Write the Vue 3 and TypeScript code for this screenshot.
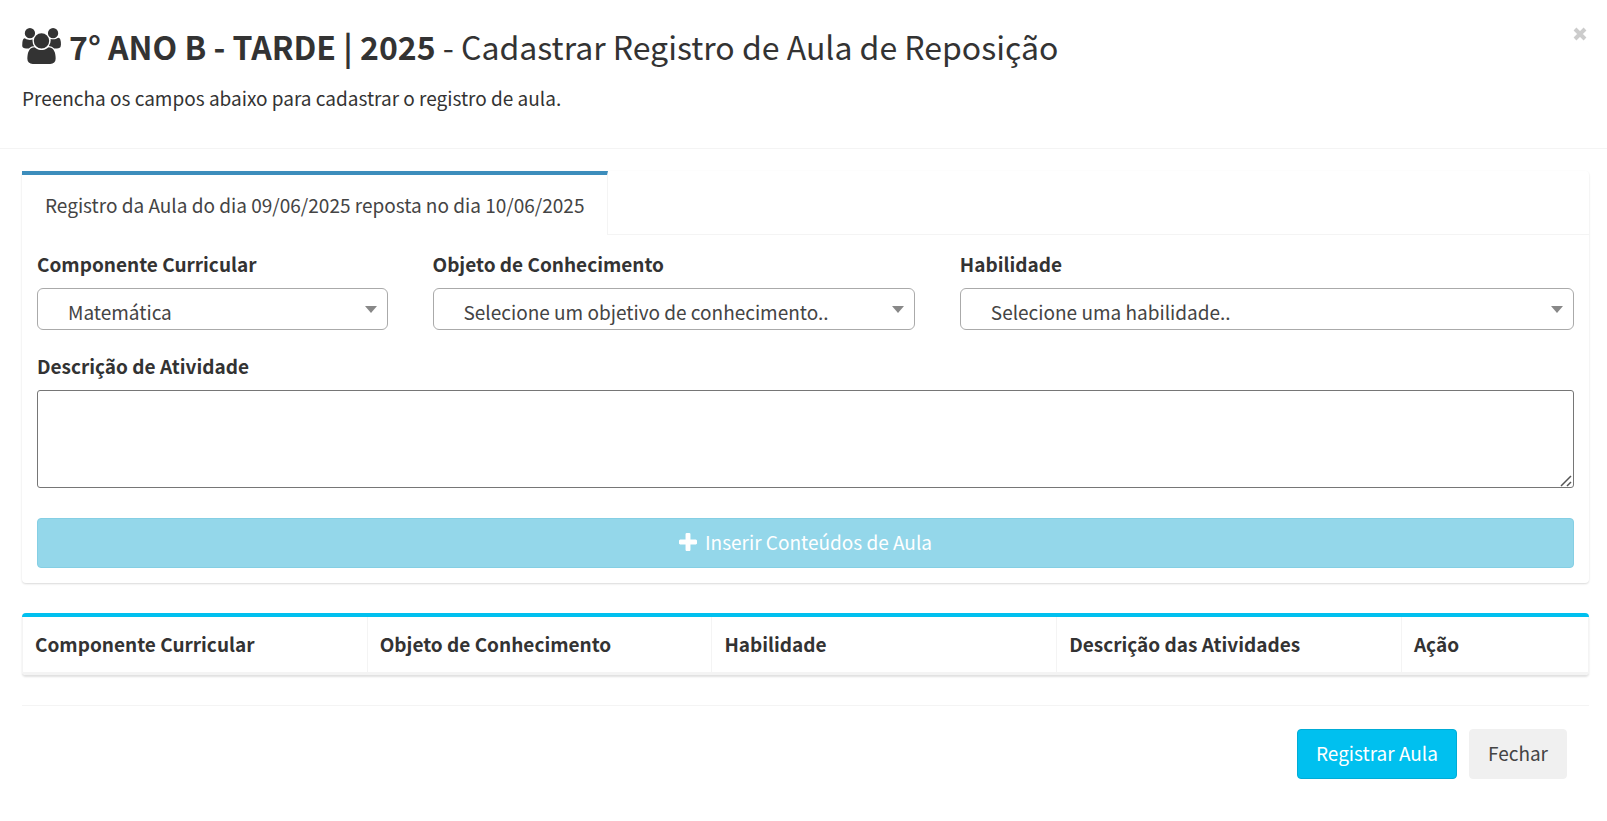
<script setup lang="ts">
import { ref } from 'vue'

interface Field {
  id: string
  label: string
  option: string
  span: string
}

const fields: Field[] = [
  { id: 'componente', label: 'Componente Curricular', option: 'Matemática', span: 'span-3' },
  { id: 'objeto', label: 'Objeto de Conhecimento', option: 'Selecione um objetivo de conhecimento..', span: 'span-4' },
  { id: 'habilidade', label: 'Habilidade', option: 'Selecione uma habilidade..', span: 'span-5' },
]

const columns: string[] = [
  'Componente Curricular',
  'Objeto de Conhecimento',
  'Habilidade',
  'Descrição das Atividades',
  'Ação',
]

const description = ref('')
</script>

<template>
  <div class="modal">
    <header class="modal-header">
      <div>
        <h1 class="title">
          <svg class="users" viewBox="0 0 1920 1792" aria-hidden="true">
            <path d="M593 896q-162 5-265 128h-134q-82 0-138-40.5t-56-118.5q0-353 124-353 6 0 43.5 21t97.5 42.5 119 21.5q67 0 133-23-5 37-5 66 0 159 90 287zm1071 637q0 120-73 189.5t-194 69.5h-874q-121 0-194-69.5t-73-189.5q0-53 3.5-103.5t14-109 26.5-108.5 43-97.5 62-81 85.5-53.5 111.5-20q10 0 43 21.5t73 48 107 48 135 21.5 135-21.5 107-48 73-48 43-21.5q61 0 111.5 20t85.5 53.5 62 81 43 97.5 26.5 108.5 14 109 3.5 103.5zm-1024-1277q0 106-75 181t-181 75-181-75-75-181 75-181 181-75 181 75 75 181zm704 384q0 159-112.5 271.5t-271.5 112.5-271.5-112.5-112.5-271.5 112.5-271.5 271.5-112.5 271.5 112.5 112.5 271.5zm576 225q0 78-56 118.5t-138 40.5h-134q-103-123-265-128 90-128 90-287 0-29-5-66 66 23 133 23 59 0 119-21.5t97.5-42.5 43.5-21q124 0 124 353zm-128-609q0 106-75 181t-181 75-181-75-75-181 75-181 181-75 181 75 75 181z" />
          </svg>
          <span><b>7° ANO B - TARDE | 2025</b> - Cadastrar Registro de Aula de Reposição</span>
        </h1>
        <p class="subtitle">Preencha os campos abaixo para cadastrar o registro de aula.</p>
      </div>
      <button class="close" type="button" aria-label="Fechar janela">
        <svg viewBox="0 0 14 14" aria-hidden="true"><path d="M2 2l10 10M12 2l-10 10" /></svg>
      </button>
    </header>

    <main class="modal-body">
      <section class="card">
        <nav class="tabs">
          <a class="tab" href="#registro">Registro da Aula do dia 09/06/2025 reposta no dia 10/06/2025</a>
        </nav>
        <form id="registro" class="form" @submit.prevent>
          <div class="row">
            <div v-for="field in fields" :key="field.id" :class="field.span">
              <label class="label" :for="field.id">{{ field.label }}</label>
              <div class="select">
                <select :id="field.id">
                  <option>{{ field.option }}</option>
                </select>
              </div>
            </div>
          </div>
          <label class="label" for="descricao">Descrição de Atividade</label>
          <textarea id="descricao" v-model="description" rows="3"></textarea>
          <button class="btn btn-insert" type="button" disabled>
            <svg viewBox="192 128 1408 1408" aria-hidden="true">
              <path d="M1600 736v192q0 40-28 68t-68 28h-416v416q0 40-28 68t-68 28h-192q-40 0-68-28t-28-68v-416h-416q-40 0-68-28t-28-68v-192q0-40 28-68t68-28h416v-416q0-40 28-68t68-28h192q40 0 68 28t28 68v416h416q40 0 68 28t28 68z" />
            </svg>
            Inserir Conteúdos de Aula
          </button>
        </form>
      </section>

      <section class="box">
        <table>
          <thead>
            <tr>
              <th v-for="column in columns" :key="column" scope="col">{{ column }}</th>
            </tr>
          </thead>
        </table>
      </section>

      <footer class="actions">
        <button class="btn btn-primary" type="button">Registrar Aula</button>
        <button class="btn btn-default" type="button">Fechar</button>
      </footer>
    </main>
  </div>
</template>

<style>
body {
  margin: 0;
  background: #fff;
}
</style>

<style scoped>
* {
  box-sizing: border-box;
}

.modal {
  color: #333;
  font-family: "Source Sans Pro", "Noto Sans CJK SC", sans-serif;
  font-size: 19px;
  line-height: 30px;
}

button,
select,
textarea {
  font: inherit;
}

.modal-header {
  display: flex;
  justify-content: space-between;
  align-items: flex-start;
  padding: 22px 18px 35px 22px;
  border-bottom: 1px solid #f4f4f4;
}

.title {
  display: flex;
  align-items: center;
  gap: 8px;
  margin: 0 0 13px;
  font-size: 32px;
  font-weight: 400;
  line-height: 48px;
}

.users {
  width: 39px;
  height: 36px;
  fill: #333;
}

.subtitle {
  margin: 0;
}

.close {
  display: flex;
  padding: 5px 2px;
  border: 0;
  background: none;
}

.close svg {
  width: 14px;
  height: 14px;
  fill: none;
  stroke: #ccc;
  stroke-width: 4;
}

.modal-body {
  padding: 22px 18px 22px 22px;
}

.card {
  border-radius: 4px;
  box-shadow: 0 1px 2px rgba(0, 0, 0, 0.15);
}

.tabs {
  display: flex;
  border-bottom: 1px solid #f4f4f4;
}

.tab {
  margin-bottom: -1px;
  padding: 15px 23px;
  border-top: 4px solid #3c8dbc;
  border-right: 1px solid #f4f4f4;
  background: #fff;
  color: #444;
  text-decoration: none;
}

.form {
  padding: 14px 15px 15px;
}

.row {
  display: grid;
  grid-template-columns: repeat(12, minmax(0, 1fr));
  column-gap: 45px;
  margin-bottom: 21px;
}

.span-3 {
  grid-column: span 3;
}

.span-4 {
  grid-column: span 4;
}

.span-5 {
  grid-column: span 5;
}

.label {
  display: block;
  margin-bottom: 9px;
  font-weight: 700;
}

.select {
  position: relative;
}

.select::after {
  content: "";
  position: absolute;
  top: 18px;
  right: 11px;
  border: 6px solid transparent;
  border-top: 7px solid #888;
  border-bottom: 0;
  pointer-events: none;
}

.select select {
  display: block;
  width: 100%;
  height: 42px;
  padding: 6px 30px 0;
  border: 1px solid #aaa;
  border-radius: 6px;
  background: #fff;
  color: #444;
  appearance: none;
}

textarea {
  display: block;
  width: 100%;
  height: 98px;
  margin-bottom: 30px;
  border: 1px solid #767676;
  border-radius: 3px;
  resize: vertical;
}

textarea::-webkit-resizer {
  background: url("data:image/svg+xml,%3Csvg xmlns='http://www.w3.org/2000/svg' width='15' height='15'%3E%3Cpath d='M3 14L13 4M9 14L13 10' stroke='%23555' stroke-width='1.5'/%3E%3C/svg%3E") no-repeat right bottom;
}

.btn {
  height: 50px;
  padding: 0 18px 2px;
  border: 1px solid;
  border-radius: 4px;
}

.btn-insert {
  display: flex;
  justify-content: center;
  align-items: center;
  gap: 8px;
  width: 100%;
  border-color: #85cfe4;
  background: #94d7ea;
  color: #fff;
}

.btn-insert svg {
  width: 18px;
  height: 18px;
  fill: #fff;
}

.box {
  margin-top: 30px;
  border-top: 4px solid #00c0ef;
  border-bottom: 3px solid #f4f4f4;
  border-radius: 4px;
  box-shadow: 0 2px 2px rgba(0, 0, 0, 0.12);
}

table {
  width: 100%;
  table-layout: fixed;
  border-spacing: 0;
}

th {
  width: 22%;
  padding: 12px 12px 13px;
  border-left: 1px solid #f4f4f4;
  text-align: left;
}

th:last-child {
  width: 12%;
  border-right: 1px solid #f4f4f4;
}

.actions {
  display: flex;
  justify-content: flex-end;
  gap: 12px;
  margin-top: 30px;
  padding: 23px 22px;
  border-top: 1px solid #f4f4f4;
}

.btn-primary {
  border-color: #00acd6;
  background: #00c0ef;
  color: #fff;
}

.btn-default {
  border-color: #f0f0f0;
  background: #f0f0f0;
  color: #444;
}
</style>
